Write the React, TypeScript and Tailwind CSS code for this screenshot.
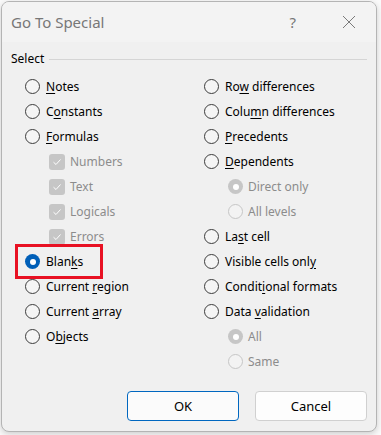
import React from 'react';

type Item = {
  label: string;
  u?: number;
  kind: 'radio' | 'check' | 'subradio';
  state?: 'on' | 'off';
  disabled?: boolean;
  indent?: boolean;
};

const left: Item[] = [
  { label: 'Notes', u: 0, kind: 'radio' },
  { label: 'Constants', u: 1, kind: 'radio' },
  { label: 'Formulas', u: 0, kind: 'radio' },
  { label: 'Numbers', kind: 'check', disabled: true, indent: true },
  { label: 'Text', kind: 'check', disabled: true, indent: true },
  { label: 'Logicals', kind: 'check', disabled: true, indent: true },
  { label: 'Errors', kind: 'check', disabled: true, indent: true },
  { label: 'Blanks', u: 4, kind: 'radio', state: 'on' },
  { label: 'Current region', u: 8, kind: 'radio' },
  { label: 'Current array', u: 8, kind: 'radio' },
  { label: 'Objects', u: 1, kind: 'radio' },
];

const right: Item[] = [
  { label: 'Row differences', u: 2, kind: 'radio' },
  { label: 'Column differences', u: 4, kind: 'radio' },
  { label: 'Precedents', u: 0, kind: 'radio' },
  { label: 'Dependents', u: 0, kind: 'radio' },
  { label: 'Direct only', kind: 'subradio', state: 'on', disabled: true, indent: true },
  { label: 'All levels', kind: 'subradio', disabled: true, indent: true },
  { label: 'Last cell', u: 2, kind: 'radio' },
  { label: 'Visible cells only', u: 17, kind: 'radio' },
  { label: 'Conditional formats', u: 6, kind: 'radio' },
  { label: 'Data validation', u: 5, kind: 'radio' },
  { label: 'All', kind: 'subradio', state: 'on', disabled: true, indent: true },
  { label: 'Same', kind: 'subradio', disabled: true, indent: true },
];

function Label({ item }: { item: Item }) {
  const { label, u } = item;
  if (u === undefined) return <span>{label}</span>;
  return (
    <span>
      {label.slice(0, u)}
      <span className="underline underline-offset-[2px]">{label[u]}</span>
      {label.slice(u + 1)}
    </span>
  );
}

function Mark({ item }: { item: Item }) {
  if (item.kind === 'check') {
    return (
      <span className="w-4 h-4 rounded-[3px] bg-[#c6c6c6] flex items-center justify-center">
        <svg width="10" height="10" viewBox="0 0 10 10" fill="none">
          <path d="M1.5 5.2 L4 7.5 L8.5 2.5" stroke="#fff" strokeWidth="1" />
        </svg>
      </span>
    );
  }
  if (item.kind === 'subradio') {
    return item.state === 'on' ? (
      <span className="w-[15px] h-[15px] rounded-full bg-[#c6c6c6] flex items-center justify-center">
        <span className="w-[6px] h-[6px] rounded-full bg-white" />
      </span>
    ) : (
      <span className="w-[15px] h-[15px] rounded-full border border-[#c6c6c6] bg-[#f3f3f3]" />
    );
  }
  return item.state === 'on' ? (
    <span className="w-[15px] h-[15px] rounded-full bg-[#005fb8] flex items-center justify-center">
      <span className="w-[6px] h-[6px] rounded-full bg-white" />
    </span>
  ) : (
    <span className="w-[15px] h-[15px] rounded-full border border-[#3c3c3c] bg-[#f5f5f5]" />
  );
}

function Row({ item }: { item: Item }) {
  const sel = item.state === 'on' && item.kind === 'radio';
  return (
    <div
      className={`relative h-[25px] flex items-center ${item.indent ? 'pl-[24px] gap-[5px]' : 'gap-[6px]'} ${
        item.disabled ? 'text-[#8c8c8c]' : 'text-black'
      }`}
    >
      {sel && (
        <span className="absolute left-[-10px] top-[-5px] w-[88px] h-[35px] border-[3px] border-[#e81123]" />
      )}
      <Mark item={item} />
      <Label item={item} />
    </div>
  );
}

export default function App() {
  return (
    <div
      className="w-[381px] h-[435px] bg-[#fafafa] relative"
      style={{ fontFamily: '"Noto Sans", "Open Sans", sans-serif' }}
    >
      <div className="absolute left-[1px] top-[1px] w-[376px] h-[431px] rounded-[8px] border border-[#b4b4b4] bg-[#f0f0f0] shadow-[0_2px_6px_rgba(0,0,0,0.18)] overflow-hidden flex flex-col">
        <div className="h-[40px] bg-[#f3f3f3] flex items-center pl-[9px] pr-[20px] shrink-0">
          <span className="text-[15px] text-[#777] flex-1 pt-[1px]">Go To Special</span>
          <span className="text-[15px] text-[#777] mr-[46px]">?</span>
          <svg width="14" height="14" viewBox="0 0 14 14">
            <path d="M1 1 L13 13 M13 1 L1 13" stroke="#7a7a7a" strokeWidth="1" />
          </svg>
        </div>
        <div className="flex-1 flex flex-col text-[12px] leading-none">
          <div className="flex items-center pl-[9px] pr-[9px] h-[31px] pt-[3px]">
            <span className="text-black">Select</span>
            <span className="flex-1 h-px bg-[#d5d5d5] ml-[5px]" />
          </div>
          <div className="flex pt-[1px]">
            <div className="w-[178px] pl-[23px] flex flex-col">
              {left.map(i => (
                <Row key={i.label} item={i} />
              ))}
            </div>
            <div className="flex-1 pl-[24px] flex flex-col">
              {right.map(i => (
                <Row key={i.label} item={i} />
              ))}
            </div>
          </div>
          <div className="flex justify-end gap-[16px] pr-[9px] mt-auto mb-[10px]">
            <button className="w-[112px] h-[30px] rounded-[4px] border border-[#0067c0] bg-[#fbfbfb] text-[13px] text-black">
              OK
            </button>
            <button className="w-[112px] h-[30px] rounded-[4px] border border-[#d0d0d0] bg-[#fdfdfd] text-[13px] text-black">
              Cancel
            </button>
          </div>
        </div>
      </div>
    </div>
  );
}
